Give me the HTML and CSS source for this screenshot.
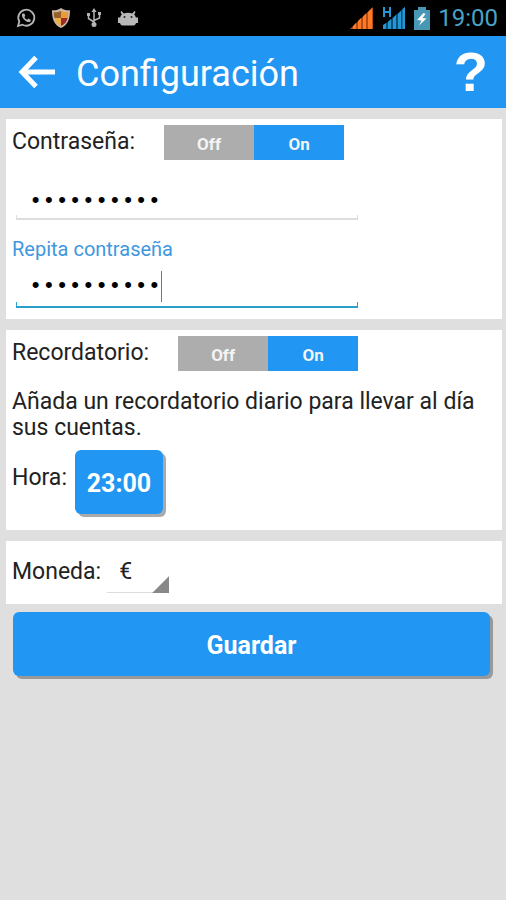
FILE: index.html
```html
<!DOCTYPE html>
<html lang="es">
<head>
<meta charset="utf-8">
<meta name="viewport" content="width=device-width, initial-scale=1">
<title>Configuración</title>
<link rel="stylesheet" href="styles.css">
</head>
<body>
<div class="status">
  <div class="status-left">
    <svg width="20" height="20" viewBox="0 0 20 20"><path d="M2 18l1.300-4.500a8 8 0 1 1 3.200 3.200z" fill="none" stroke="#b4b4b4" stroke-width="1.800"/><path d="M6.500 5.500c-1.200 1.500-.5 4 1.800 6.300s4.800 3 6.200 1.600l.3-1.500-2.300-1.300-1.300 1.200c-1.300-.6-2.300-1.700-2.900-2.900l1-1.200-1-2.300z" fill="#b4b4b4"/></svg>
    <svg width="20" height="22" viewBox="0 0 20 22"><path d="M10 1c2.500 2 5.500 2.500 9 2.300C19 12 17 18 10 21 3 18 1 12 1 3.300 4.500 3.500 7.500 3 10 1z" fill="#c9b7a4"/><path d="M10 4v7H3.400C3 9 2.800 7.500 2.800 5.200 5.500 5.300 8 5 10 4z" fill="#94602e"/><path d="M10 4c2 1 4.500 1.300 7.200 1.200 0 2.300-.2 3.800-.6 5.800H10z" fill="#e99b35"/><path d="M3.400 11H10v8c-4-1.800-5.800-4.500-6.600-8z" fill="#eead43"/><path d="M10 11h6.600c-.8 3.500-2.600 6.200-6.600 8z" fill="#992b28"/></svg>
    <svg width="16" height="20" viewBox="0 0 16 20"><g fill="none" stroke="#b4b4b4" stroke-width="1.500"><path d="M8 3v14M2.500 7v3.500L8 14M13.500 6v4L8 12.500"/></g><path d="M8 0l2.500 4h-5zM1 5h3v3H1zM12 4h3v3h-3z" fill="#b4b4b4"/><circle cx="8" cy="16.500" r="2.500" fill="#b4b4b4"/></svg>
    <svg width="22" height="18" viewBox="0 0 22 18"><path d="M4.500 2l2.300 2.600c2.500-1 5.900-1 8.400 0L17.500 2l1 .8-1.300 3c1 .8 1.400 1.700 1.600 2.700H21V14h-2c-.5 2-1.500 2.500-3.500 2.500h-9C4.500 16.500 3.500 16 3 14H1V8.500h2.200c.2-1 .6-1.900 1.600-2.700l-1.300-3z" fill="#b9b9b9"/><circle cx="7.500" cy="8" r="1" fill="#222"/><circle cx="14.500" cy="8" r="1" fill="#222"/></svg>
  </div>
  <div class="status-right">
    <svg width="24" height="22" viewBox="0 0 24 22"><path d="M0 22L23 0v22z" fill="#b64e13"/><path d="M3 22v-3l3-3v6zM8 22v-8l3-3v11zM13 22V9.500l3-3V22zM18 22V5l4-4v21z" fill="#ff7a26"/></svg>
    <svg width="24" height="22" viewBox="0 0 24 22"><path d="M1 22v-3l22-19v22z" fill="#0d4f78"/><path d="M0 0h10v12H0z" fill="#000"/><path d="M1 22v-4l3-2v6zM6 22v-7l3-3v10zM11 22V11l3-3v14zM16 22V7l3-3v18zM20.500 22V2L23 0v22z" fill="#2396d3"/><path d="M1 0h2v4h4V0h2v10H7V6H3v4H1z" fill="#2396d3"/></svg>
    <svg width="16" height="23" viewBox="0 0 16 23"><path d="M4 0h8v3h4v20H0V3h4z" fill="#4797b5"/><path d="M9.500 6L3 13l4.500.5L5 18.500l7.500-7L8.500 11l3-4z" fill="#fff"/></svg>
    <span class="clock">19:00</span>
  </div>
</div>
<header class="bar">
  <button class="back" type="button" aria-label="Atrás"><svg width="38" height="34" viewBox="0 0 38 34"><path d="M18 2.500L4 17l14 14.500M5 17h32" fill="none" stroke="#fff" stroke-width="5"/></svg></button>
  <h1>Configuración</h1>
  <button class="help" type="button">?</button>
</header>
<main>
  <form>
    <section class="card password">
      <div class="row">
        <span id="pw-label">Contraseña:</span>
        <div class="toggle" role="radiogroup" aria-labelledby="pw-label">
          <label><input type="radio" name="pw">Off</label>
          <label><input type="radio" name="pw" checked>On</label>
        </div>
      </div>
      <div class="field"><input type="password" value="abcdefghij" aria-labelledby="pw-label"></div>
      <label class="hint" for="repeat">Repita contraseña</label>
      <div class="field active"><input id="repeat" type="password" value="abcdefghij"></div>
    </section>
    <section class="card reminder">
      <div class="row">
        <span id="rem-label">Recordatorio:</span>
        <div class="toggle" role="radiogroup" aria-labelledby="rem-label">
          <label><input type="radio" name="rem">Off</label>
          <label><input type="radio" name="rem" checked>On</label>
        </div>
      </div>
      <p>Añada un recordatorio diario para llevar al día sus cuentas.</p>
      <div class="time"><label for="hour">Hora:</label><button id="hour" class="raised" type="button">23:00</button></div>
    </section>
    <section class="card currency">
      <label for="currency">Moneda:</label>
      <div class="spinner"><select id="currency"><option>€</option></select></div>
    </section>
    <button class="raised save" type="button">Guardar</button>
  </form>
</main>
</body>
</html>
```
FILE: styles.css
```css
* { box-sizing: border-box; }
body {
  margin: 0;
  min-height: 100vh;
  background: #dfdfdf;
  color: #222;
  font: 23px/26px Roboto, "Liberation Sans", sans-serif;
}
button, input, select { font: inherit; color: inherit; border: 0; margin: 0; padding: 0; background: none; }
svg { display: block; }

.status {
  display: flex;
  justify-content: space-between;
  height: 36px;
  padding: 0 8px 0 16px;
  background: #000;
}
.status-left, .status-right { display: flex; align-items: center; }
.status-left { gap: 15px; }
.status-right { gap: 8px; }
.clock { color: #49a3c6; font-size: 24px; }

.bar {
  display: flex;
  align-items: center;
  height: 72px;
  padding: 0 18px;
  background: #2196f3;
  color: #fff;
}
h1 { flex: 1; margin: 0 0 0 20px; padding-top: 4px; font-size: 36px; line-height: 44px; font-weight: 400; }
.help { font: 700 56px/56px "Liberation Sans", sans-serif; }

form { display: flex; flex-direction: column; gap: 11px; padding: 11px 4px 11px 6px; }
.card { padding: 6px; background: #fff; }
.row { display: flex; align-items: flex-start; gap: 29px; }
.row > span { padding-top: 4px; }
.toggle { display: flex; }
.toggle label {
  display: flex;
  align-items: center;
  justify-content: center;
  position: relative;
  width: 90px;
  height: 35px;
  padding-top: 2px;
  background: #adadad;
  color: #f4f4f4;
  font-size: 17px;
  font-weight: 700;
}
.toggle label:has(:checked) { background: #2196f3; }
.toggle input { position: absolute; inset: 0; opacity: 0; }

.password { padding-bottom: 11px; }
.field {
  display: flex;
  align-items: center;
  width: 71%;
  max-width: 342px;
  height: 34px;
  margin-left: 4px;
  padding: 0 0 4px 13px;
  background:
    linear-gradient(#ddd, #ddd) left bottom / 1px 5px no-repeat,
    linear-gradient(#ddd, #ddd) right bottom / 1px 5px no-repeat,
    linear-gradient(#ddd, #ddd) left bottom / 100% 2px no-repeat;
}
.row + .field { margin-top: 26px; }
.field input {
  field-sizing: content;
  height: 31px;
  color: #000;
  font: 22px/31px "Liberation Mono", monospace;
  outline: 0;
}
.field.active {
  height: 39px;
  margin-top: 7px;
  background:
    linear-gradient(#2a9fc9, #2a9fc9) left bottom / 1px 6px no-repeat,
    linear-gradient(#2a9fc9, #2a9fc9) right bottom / 1px 6px no-repeat,
    linear-gradient(#2a9fc9, #2a9fc9) left bottom / 100% 2px no-repeat;
}
.active input { border-right: 1px solid #777; }
.hint { display: block; margin-top: 16px; color: #3f97e0; font-size: 20px; }

.reminder { padding-bottom: 16px; }
p { margin: 18px 0 9px; }
.time { display: flex; align-items: flex-start; gap: 8px; }
.time label { padding-top: 15px; }
.raised {
  height: 64px;
  padding-top: 4px;
  border-radius: 6px;
  background: #2196f3;
  box-shadow: 3px 3px 0 #aaa;
  color: #fff;
  font-weight: 700;
  font-size: 25px;
}
.time .raised { width: 88px; }

.currency { display: flex; gap: 6px; padding: 18px 6px 11px; }
.spinner {
  position: relative;
  height: 34px;
  border-bottom: 1px solid #ddd;
}
.spinner::after {
  content: "";
  position: absolute;
  right: 0;
  bottom: -1px;
  width: 17px;
  height: 17px;
  background: #888;
  clip-path: polygon(100% 0, 100% 100%, 0 100%);
  pointer-events: none;
}
select { appearance: none; display: block; width: 62px; height: 26px; padding-left: 12px; }
.save { margin: -3px 12px 0 7px; box-shadow: 3px 3px 0 #999; }
```
